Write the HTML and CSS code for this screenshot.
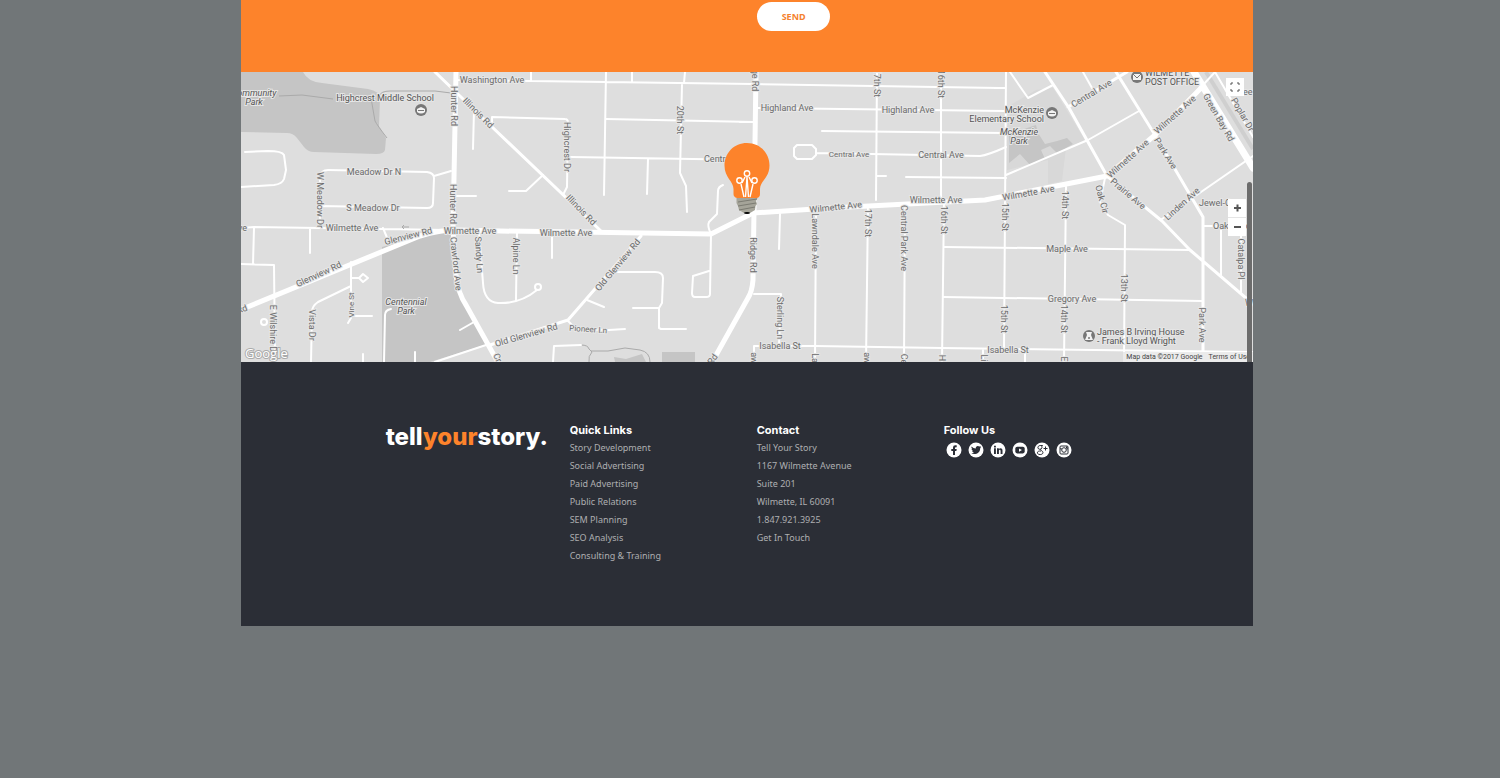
FILE: index.html
```
<!DOCTYPE html>
<html lang="en"><head>
<meta charset="utf-8">
<meta name="viewport" content="width=device-width, initial-scale=1">
<title>Tell Your Story</title>
<link rel="stylesheet" href="styles.css"></head>

<body>
<div class="page">

<form class="contact-form">
<button type="button" class="button">SEND</button>
</form>

<section class="map">
<svg class="map-canvas" viewBox="241 72 1012 290" role="img" aria-label="Map of Wilmette">
	<!-- parks -->
	<g class="park">
		<path d="M240 72H303Q308 82 322 83L368 89Q381 92 380 98L379 126L386 138L385 150Q384 154 376 154L314 152Q308 152 304 147L297 138Q293 133 287 133L240 132Z"/>
		<path d="M382 247L430 234L453 232L458 278L466 305L488 344L430 362H382Z"/>
		<path d="M614 357L626 359L642 354L646 362H615ZM662 352H695V362H662Z"/>
	</g>
	<path class="park-light" d="M1007 128L1012 104L1036 90L1053 88L1066 109L1085 140L1066 148L1062 181L1048 184V160L1007 170Z"/>
	<path class="park" d="M1009 134L1036 125L1038 133L1045 144L1057 141L1067 138L1073 144L1057 153L1050 146L1041 150L1045 159L1030 165L1020 154L1009 163Z"/>
	<g class="trail">
		<path d="M279 96L302 95L333 99M371 98L375 121Q377 125 387 138M379 96Q381 91 390 91H435L451 93"/>
		<path d="M581 345Q588 345 589 349L592 352Q588 356 589 362M591 351H608L625 348L640 350Q650 352 650 362"/>
	</g>
	<path class="rail" d="M1206 72L1253 149"/>
	<!-- side streets -->
	<g class="street">
		<path d="M245 152L268 151Q282 151 284 155L286 170L284 179Q282 184 274 185L240 187"/>
		<path d="M320 228V177Q321 170 328 170L427 172Q434 173 434 178L433 203Q433 208 427 208L321 206M434 176L451 171M455 196H476"/>
		<path d="M455 80L531 81L753 84L1000 88M531 72V81M606 72L604 195M632 72V82M685 72L684 83M682 84L680 173L686 186L687 212"/>
		<path d="M474 110L473 149M492 124V117L565 119Q568 119 568 123L567 187L563 195M543 175L526 191H509"/>
		<path d="M606 119L754 122M571 157L754 160M648 159L647 194M723 185Q718 187 718 191L717 214L709 222Q707 226 711 234"/>
		<path d="M240 228L254 227L383 229L447 230M254 228L253 264M240 264L274 265L275 358M310 228V253M383 228L388 240"/>
		<path d="M351 262V318L348 323M351 316H372M351 278H359M363 274L368 278L363 282L359 278ZM351 286L318 302Q312 306 312 312L311 362M363 354V362"/>
		<path d="M391 309Q385 310 385 315L384 362M415 352V362M435 362L489 344M460 330L474 322"/>
		<path d="M479 232L483 283Q484 302 498 303Q520 304 537 290M517 232L516 300M552 236V258"/>
		<circle cx="538" cy="287" r="3"/><circle cx="264" cy="322" r="3"/>
		<path d="M587 300L604 307M617 272L655 272Q663 272 663 278L662 303L659 308V328L661 329H686M633 308H659"/>
		<path d="M711 234L710 294Q710 297 706 297H695Q692 297 692 293L693 276L709 271M568 321L576 329L609 330L625 329M553 362L554 346L581 345"/>
		<path d="M756 108L1005 111M740 122H754M822 131L1005 133M816 153L980 156Q988 155 1006 147M797 145H812L816 149V155L812 159H797L794 156V148Z"/>
		<path d="M877 72L876 200M941 72V202M877 176H886M906 177L1006 178M780 214L779 249"/>
		<path d="M816 208L815 362M868 205L866 362M905 204L904 362M944 202L942 362M945 247L1190 250M944 297L1202 301"/>
		<path d="M754 362V346L815 346L942 348L1253 352M754 294H781L779 345M983 350V362M1025 350V362"/>
		<path d="M1006 72L1004 350M995 88H1006M1006 175L1088 140L1139 111M1010 72L1028 98L1053 85"/>
		<path d="M1083 72L1092 88M1105 178L1100 202L1108 215L1125 225L1124 362M1066 187L1064 362"/>
		<path d="M1203 85L1215 72L1253 137M1253 156L1162 219M1203 226H1250M1221 228V275M1241 228V292"/>
	</g>
	<g class="avenue">
		<path d="M435 72L490 125L602 232M641 236L568 320L490 345"/>
		<path d="M1045 72L1069 108L1107 176L1162 221L1190 250L1253 304M1068 107L1127 72M1116 72L1155 135L1203 217V352"/>
	</g>
	<g class="main-road">
		<path d="M240 310L420 236Q440 230 455 230L500 231L711 234L753 213L830 208L985 200L1107 176L1155 135L1203 86"/>
		<path d="M456 72L453 230L456 275Q458 293 466 305L500 366M756 72L753 280Q752 292 748 298L710 366"/>
		<path class="wide" d="M1194 72L1253 168"/>
	</g>
	<!-- street names -->
	<g class="label">
		<text x="492" y="83">Washington Ave</text>
		<text x="787" y="111">Highland Ave</text>
		<text x="908" y="113">Highland Ave</text>
		<text class="small" x="849" y="157">Central Ave</text>
		<text x="941" y="158">Central Ave</text>
		<text x="704" y="162" class="start">Central</text>
		<text x="374" y="175">Meadow Dr N</text>
		<text x="373" y="211">S Meadow Dr</text>
		<text x="352" y="231">Wilmette Ave</text>
		<text x="470" y="234">Wilmette Ave</text>
		<text x="566" y="236">Wilmette Ave</text>
		<text x="936" y="203">Wilmette Ave</text>
		<text x="1067" y="252">Maple Ave</text>
		<text x="1072" y="302">Gregory Ave</text>
		<text x="780" y="349">Isabella St</text>
		<text x="1008" y="353">Isabella St</text>
		<text class="start" x="1199" y="206">Jewel-Osco</text>
		<text class="start" x="1213" y="229">Oakwood</text>
		<text class="start" x="238" y="231">ve</text>
		<text class="start" x="1245" y="306">W</text>
		<text class="start" x="1243" y="95">ee</text>
		<text transform="translate(451 106) rotate(90)">Hunter Rd</text>
		<text transform="translate(450 204) rotate(90)">Hunter Rd</text>
		<text transform="translate(476 115) rotate(45)">Illinois Rd</text>
		<text transform="translate(579 212) rotate(46)">Illinois Rd</text>
		<text transform="translate(564 147) rotate(90)">Highcrest Dr</text>
		<text transform="translate(677 120) rotate(90)">20th St</text>
		<text transform="translate(752 80) rotate(90)">ge Rd</text>
		<text transform="translate(874 83) rotate(90)">17th St</text>
		<text transform="translate(938 84) rotate(90)">16th St</text>
		<text transform="translate(317 200) rotate(90)">W Meadow Dr</text>
		<text transform="translate(409 239) rotate(-14)">Glenview Rd</text>
		<text transform="translate(320 277) rotate(-25)">Glenview Rd</text>
		<text transform="translate(243 312) rotate(-20)">Rd</text>
		<text transform="translate(270 330) rotate(90)">E Wilshire Dr</text>
		<text transform="translate(309 325) rotate(90)">Vista Dr</text>
		<text class="small" transform="translate(354 305) rotate(-90)">Vine St</text>
		<text transform="translate(453 264) rotate(84)">Crawford Ave</text>
		<text transform="translate(476 255) rotate(87)">Sandy Ln</text>
		<text transform="translate(513 256) rotate(90)">Alpine Ln</text>
		<text transform="translate(620 267) rotate(-50)">Old Glenview Rd</text>
		<text transform="translate(527 338) rotate(-16)">Old Glenview Rd</text>
		<text class="small" transform="translate(588 332) rotate(4)">Pioneer Ln</text>
		<text transform="translate(750 255) rotate(90)">Ridge Rd</text>
		<text transform="translate(777 318) rotate(90)">Sterling Ln</text>
		<text transform="translate(836 210) rotate(-6)">Wilmette Ave</text>
		<text transform="translate(812 241) rotate(90)">Lawndale Ave</text>
		<text transform="translate(865 223) rotate(90)">17th St</text>
		<text transform="translate(901 238) rotate(90)">Central Park Ave</text>
		<text transform="translate(941 220) rotate(90)">16th St</text>
		<text transform="translate(1002 217) rotate(90)">15th St</text>
		<text transform="translate(1001 319) rotate(90)">15th St</text>
		<text transform="translate(1062 205) rotate(90)">14th St</text>
		<text transform="translate(1061 319) rotate(90)">14th St</text>
		<text transform="translate(1121 288) rotate(90)">13th St</text>
		<text transform="translate(1199 325) rotate(90)">Park Ave</text>
		<text transform="translate(1238 259) rotate(90)">Catalpa Pl</text>
		<text transform="translate(1029 196) rotate(-10)">Wilmette Ave</text>
		<text transform="translate(1130 161) rotate(-42)">Wilmette Ave</text>
		<text transform="translate(1177 117) rotate(-42)">Wilmette Ave</text>
		<text transform="translate(1093 96) rotate(-31)">Central Ave</text>
		<text transform="translate(1216 119) rotate(60)">Green Bay Rd</text>
		<text transform="translate(1240 116) rotate(60)">Poplar Dr</text>
		<text transform="translate(1163 155) rotate(58)">Park Ave</text>
		<text transform="translate(1126 196) rotate(40)">Prairie Ave</text>
		<text transform="translate(1184 206) rotate(-42)">Linden Ave</text>
		<text transform="translate(1099 200) rotate(75)">Oak Cir</text>
		<text transform="translate(751 358) rotate(90)">aw</text>
		<text transform="translate(812 358) rotate(90)">La</text>
		<text transform="translate(864 358) rotate(90)">aw</text>
		<text transform="translate(901 359) rotate(90)">Ce</text>
		<text transform="translate(939 358) rotate(90)">H</text>
		<text transform="translate(981 358) rotate(90)">Li</text>
		<text transform="translate(1061 359) rotate(90)">E</text>
		<text transform="translate(495 359) rotate(65)">Cr</text>
		<text transform="translate(715 361) rotate(-55)">Rd</text>
	</g>
	<!-- places -->
	<g class="label place">
		<text x="385" y="101">Highcrest Middle School</text>
		<text class="end" x="1044" y="113">McKenzie</text>
		<text class="end" x="1044" y="122">Elementary School</text>
		<text class="start" x="1145" y="76">WILMETTE</text>
		<text class="start" x="1145" y="85">POST OFFICE</text>
		<text class="start" x="1097" y="335">James B Irving House</text>
		<text class="start" x="1097" y="344">- Frank Lloyd Wright</text>
		<g class="park-name">
			<text x="254" y="96">Community</text>
			<text x="254" y="105">Park</text>
			<text x="406" y="305">Centennial</text>
			<text x="406" y="314">Park</text>
			<text x="1019" y="135">McKenzie</text>
			<text x="1019" y="144">Park</text>
		</g>
	</g>
	<g class="pin">
		<circle cx="421" cy="110" r="6"/><path d="M417 109L421 107L425 109V112Q421 115 417 112Z"/><path class="fold" d="M418 110.500H424"/>
		<circle cx="1052" cy="113" r="6"/><path d="M1048 112L1052 110L1056 112V115Q1052 118 1048 115Z"/><path class="fold" d="M1049 113.500H1055"/>
		<circle cx="1137" cy="77" r="6"/><path d="M1133 74H1141V80H1133Z"/><path class="fold" d="M1133 74L1137 78L1141 74"/>
		<circle cx="1089" cy="336" r="6"/><path d="M1086 332H1092L1091 335L1093 340H1085L1087 335Z"/><circle cx="1089" cy="338" r="1"/>
	</g>
	<path class="arrow" d="M409 227H402M404 225L402 227L404 229"/>
	<text class="google" x="245" y="358">Google</text>
	<!-- office marker -->
	<g class="bulb">
		<path class="glass" d="M747 143C734 143 724.500 153 724.500 165.500C724.500 178 733.500 181 733.500 189V194Q733.500 197 737 198H757Q760 197 760 194V189C760 181 769.500 178 769.500 165.500C769.500 153 760 143 747 143Z"/>
		<path class="wire" d="M744 197L741 184M750 197L753 184M745.500 197L747 177L748.500 197M742 183L745 177M752 183L749 177"/>
		<circle class="wire" cx="747" cy="173.500" r="2.700"/>
		<circle class="wire" cx="739.500" cy="180.500" r="2.700"/>
		<circle class="wire" cx="754.500" cy="180.500" r="2.700"/>
		<path class="base" d="M736.500 198H757.500L756 201L757 204L755.500 206L755 210L750 213H744L739 210L738 206L736.500 203Z"/>
		<path class="thread" d="M738 202L757 199M738 206L756 203M739 210L755 207"/>
		<ellipse cx="747" cy="213" rx="3" ry="1"/>
	</g>
</svg>
<button type="button" class="map-button fullscreen" aria-label="Full screen"><svg viewBox="0 0 12 12"><path d="M2 4V2H4M8 2H10V4M10 8V10H8M4 10H2V8"/></svg></button>
<div class="zoom">
	<button type="button" class="map-button" aria-label="Zoom in"><svg viewBox="0 0 12 12"><path d="M3 6H10M6.500 2.500V9.500"/></svg></button>
	<button type="button" class="map-button" aria-label="Zoom out"><svg viewBox="0 0 12 12"><path d="M3 6H10"/></svg></button>
</div>
<div class="map-credit"><span>Map data ©2017 Google</span><a href="#">Terms of Use</a></div>
<div class="scroll-thumb"></div>
</section>

<footer class="footer">
	<div class="columns">
		<a href="#" class="logo">tell<span>your</span>story.</a>
		<div>
			<h2>Quick Links</h2>
			<ul>
				<li><a href="#">Story Development</a></li>
				<li><a href="#">Social Advertising</a></li>
				<li><a href="#">Paid Advertising</a></li>
				<li><a href="#">Public Relations</a></li>
				<li><a href="#">SEM Planning</a></li>
				<li><a href="#">SEO Analysis</a></li>
				<li><a href="#">Consulting &amp; Training</a></li>
			</ul>
		</div>
		<div>
			<h2>Contact</h2>
			<ul>
				<li>Tell Your Story</li>
				<li>1167 Wilmette Avenue</li>
				<li>Suite 201</li>
				<li>Wilmette, IL 60091</li>
				<li>1.847.921.3925</li>
				<li><a href="#">Get In Touch</a></li>
			</ul>
		</div>
		<div>
			<h2>Follow Us</h2>
			<div class="social">
				<a href="#" aria-label="Facebook"><svg viewBox="0 0 16 16"><circle cx="8" cy="8" r="7.500"/><path d="M7 13V9H5.300V7H7V5.500Q7 3.300 9.300 3.300H10.700V5.200H9.700Q9 5.200 9 6V7H10.700L10.400 9H9V13Z"/></svg></a>
				<a href="#" aria-label="Twitter"><svg viewBox="0 0 16 16"><circle cx="8" cy="8" r="7.500"/><path d="M3.500 4.500Q5.300 6.400 7.800 6.500C7.400 4.200 9.900 3.100 11.400 4.500L12.900 4L12.200 5.200L13.200 5L12.200 6.200C12.200 10.800 7.500 13.400 3.200 11.300Q5 11.300 6 10.500Q4.500 10.200 4.100 8.900H5Q3.500 8.300 3.500 6.700L4.300 6.900Q3 5.800 3.500 4.500Z"/></svg></a>
				<a href="#" aria-label="LinkedIn"><svg viewBox="0 0 16 16"><circle cx="8" cy="8" r="7.500"/><path d="M4 6.300H5.900V12H4ZM4 3.700H5.900V5.400H4ZM7 6.300H8.800V7.100C9.800 5.700 12.500 5.800 12.500 8.600V12H10.600V9C10.600 7.400 8.900 7.500 8.900 9V12H7Z"/></svg></a>
				<a href="#" aria-label="YouTube"><svg viewBox="0 0 16 16"><circle cx="8" cy="8" r="7.500"/><rect x="3.300" y="4.800" width="9.400" height="6.600" rx="1.800"/><path class="play" d="M7 6.500L10 8.100L7 9.700Z"/></svg></a>
				<a href="#" aria-label="Google Plus"><svg viewBox="0 0 16 16"><circle cx="8" cy="8" r="7.500"/><path class="line" d="M8.800 3.500H6.500C3 3.500 3.300 7.300 5.800 7.300C8.800 7.300 8.500 3.500 6.500 3.500M6.500 7.300C6.500 8.800 9 8.700 9 10.700C9 13.100 3.400 13.200 3.400 10.800C3.400 9.300 5 8.900 7 9M11.500 4.500V8.500M9.500 6.500H13.500"/></svg></a>
				<a href="#" aria-label="Instagram"><svg viewBox="0 0 16 16"><circle cx="8" cy="8" r="7.500"/><rect class="line" x="4" y="4" width="8" height="8" rx="1"/><path class="line" d="M4 6.800H5.800M10.200 6.800H12"/><circle class="line" cx="8" cy="8" r="2.300"/><path d="M10 4.500H11.500V6H10Z"/></svg></a>
			</div>
		</div>
	</div>
</footer>

</div>
</body>
</html>
```
FILE: styles.css
```
body {
	margin: 0;
	background-color: #717678;
	font-family: "Noto Sans", sans-serif;
}
.page {
	margin: 0 247px 0 241px;
}
a {
	color: inherit;
	text-decoration: none;
}

/* orange strip with the send button */
.contact-form {
	background-color: #fd832b;
	padding: 2px 0 41px 51%;
}
.button {
	display: block;
	width: 73px;
	height: 29px;
	padding: 0;
	border: 0;
	border-radius: 15px;
	background-color: #fff;
	color: #f5822f;
	font: bold 9px "Noto Sans", sans-serif;
}

/* map */
.map {
	position: relative;
	overflow: hidden;
	background-color: #dedede;
}
.map-canvas {
	display: block;
	width: 100%;
	height: auto;
}
.park { fill: #c5c5c5; }
.park-light { fill: #d8d8d8; }
.trail { fill: none; stroke: #aaa; }
.rail { stroke: #cfcfcf; stroke-width: 4; }
.street, .avenue, .main-road {
	fill: none;
	stroke: #fff;
	stroke-width: 2;
	stroke-linejoin: round;
	stroke-linecap: round;
}
.avenue { stroke-width: 3; }
.main-road { stroke-width: 5; }
.wide { stroke-width: 7; }
.label {
	font: 9px Roboto, sans-serif;
	fill: #6b6b6b;
	stroke: #e6e6e6;
	stroke-width: 2px;
	paint-order: stroke;
	text-anchor: middle;
}
.small { font-size: 8px; }
.place {
	fill: #555;
}
.park-name { font-style: italic; }
.start { text-anchor: start; }
.end { text-anchor: end; }
.pin circle { fill: #777; }
.pin path { fill: #f2f2f2; }
.pin .fold { fill: none; stroke: #777; }
.arrow { fill: none; stroke: #aaa; }
.google {
	font: 13px "Open Sans", sans-serif;
	fill: #fff;
	stroke: #aaa;
	stroke-width: 2px;
	paint-order: stroke;
}
.glass { fill: #fd832b; }
.wire { fill: none; stroke: #fff; stroke-width: 1.400; }
.base { fill: #a5a499; }
.thread { stroke: #7b7b72; }

.map-button {
	display: block;
	width: 18px;
	height: 18px;
	padding: 3px;
	border: 0;
	background-color: #fff;
}
.map-button svg {
	display: block;
	width: 12px;
	height: 12px;
	fill: none;
	stroke: #555;
	stroke-width: 2;
}
.fullscreen {
	position: absolute;
	top: 6px;
	right: 9px;
}
.fullscreen svg {
	stroke-width: 1;
}
.zoom {
	position: absolute;
	top: 127px;
	right: 7px;
	background-color: #e5e5e5;
}
.zoom .map-button + .map-button {
	margin-top: 1px;
}
.map-credit {
	position: absolute;
	right: 0;
	bottom: 0;
	display: flex;
	gap: 6px;
	padding: 0 3px;
	background-color: #ebebeb;
	color: #444;
	font: 7px/10px Roboto, sans-serif;
}
.scroll-thumb {
	position: absolute;
	top: 110px;
	right: 1px;
	bottom: 0;
	width: 5px;
	border-radius: 3px 3px 0 0;
	background-color: #6c6c6c;
}

/* footer */
.footer {
	padding: 59px 0 61px 14%;
	background-color: #2b2e36;
	color: #aeafb1;
	font-size: 9px;
	line-height: 18px;
}
.columns {
	display: grid;
	grid-template-columns: repeat(4, 1fr);
	max-width: 748px;
}
.logo {
	padding-left: 3px;
	color: #fff;
	font: 800 24px/32px Inter, sans-serif;
}
.logo span {
	color: #fd832b;
}
.footer h2 {
	margin: 0;
	color: #fff;
	font: bold 11px/18px Inter, sans-serif;
}
.footer ul {
	margin: 0;
	padding: 0;
	list-style: none;
}
.social {
	display: flex;
	gap: 6px;
	padding: 3px 2px;
}
.social svg {
	display: block;
	width: 16px;
	height: 16px;
	fill: #2b2e36;
}
.social svg > circle:first-child, .social .play {
	fill: #fff;
}
.social .line {
	fill: none;
	stroke: #2b2e36;
}
```
